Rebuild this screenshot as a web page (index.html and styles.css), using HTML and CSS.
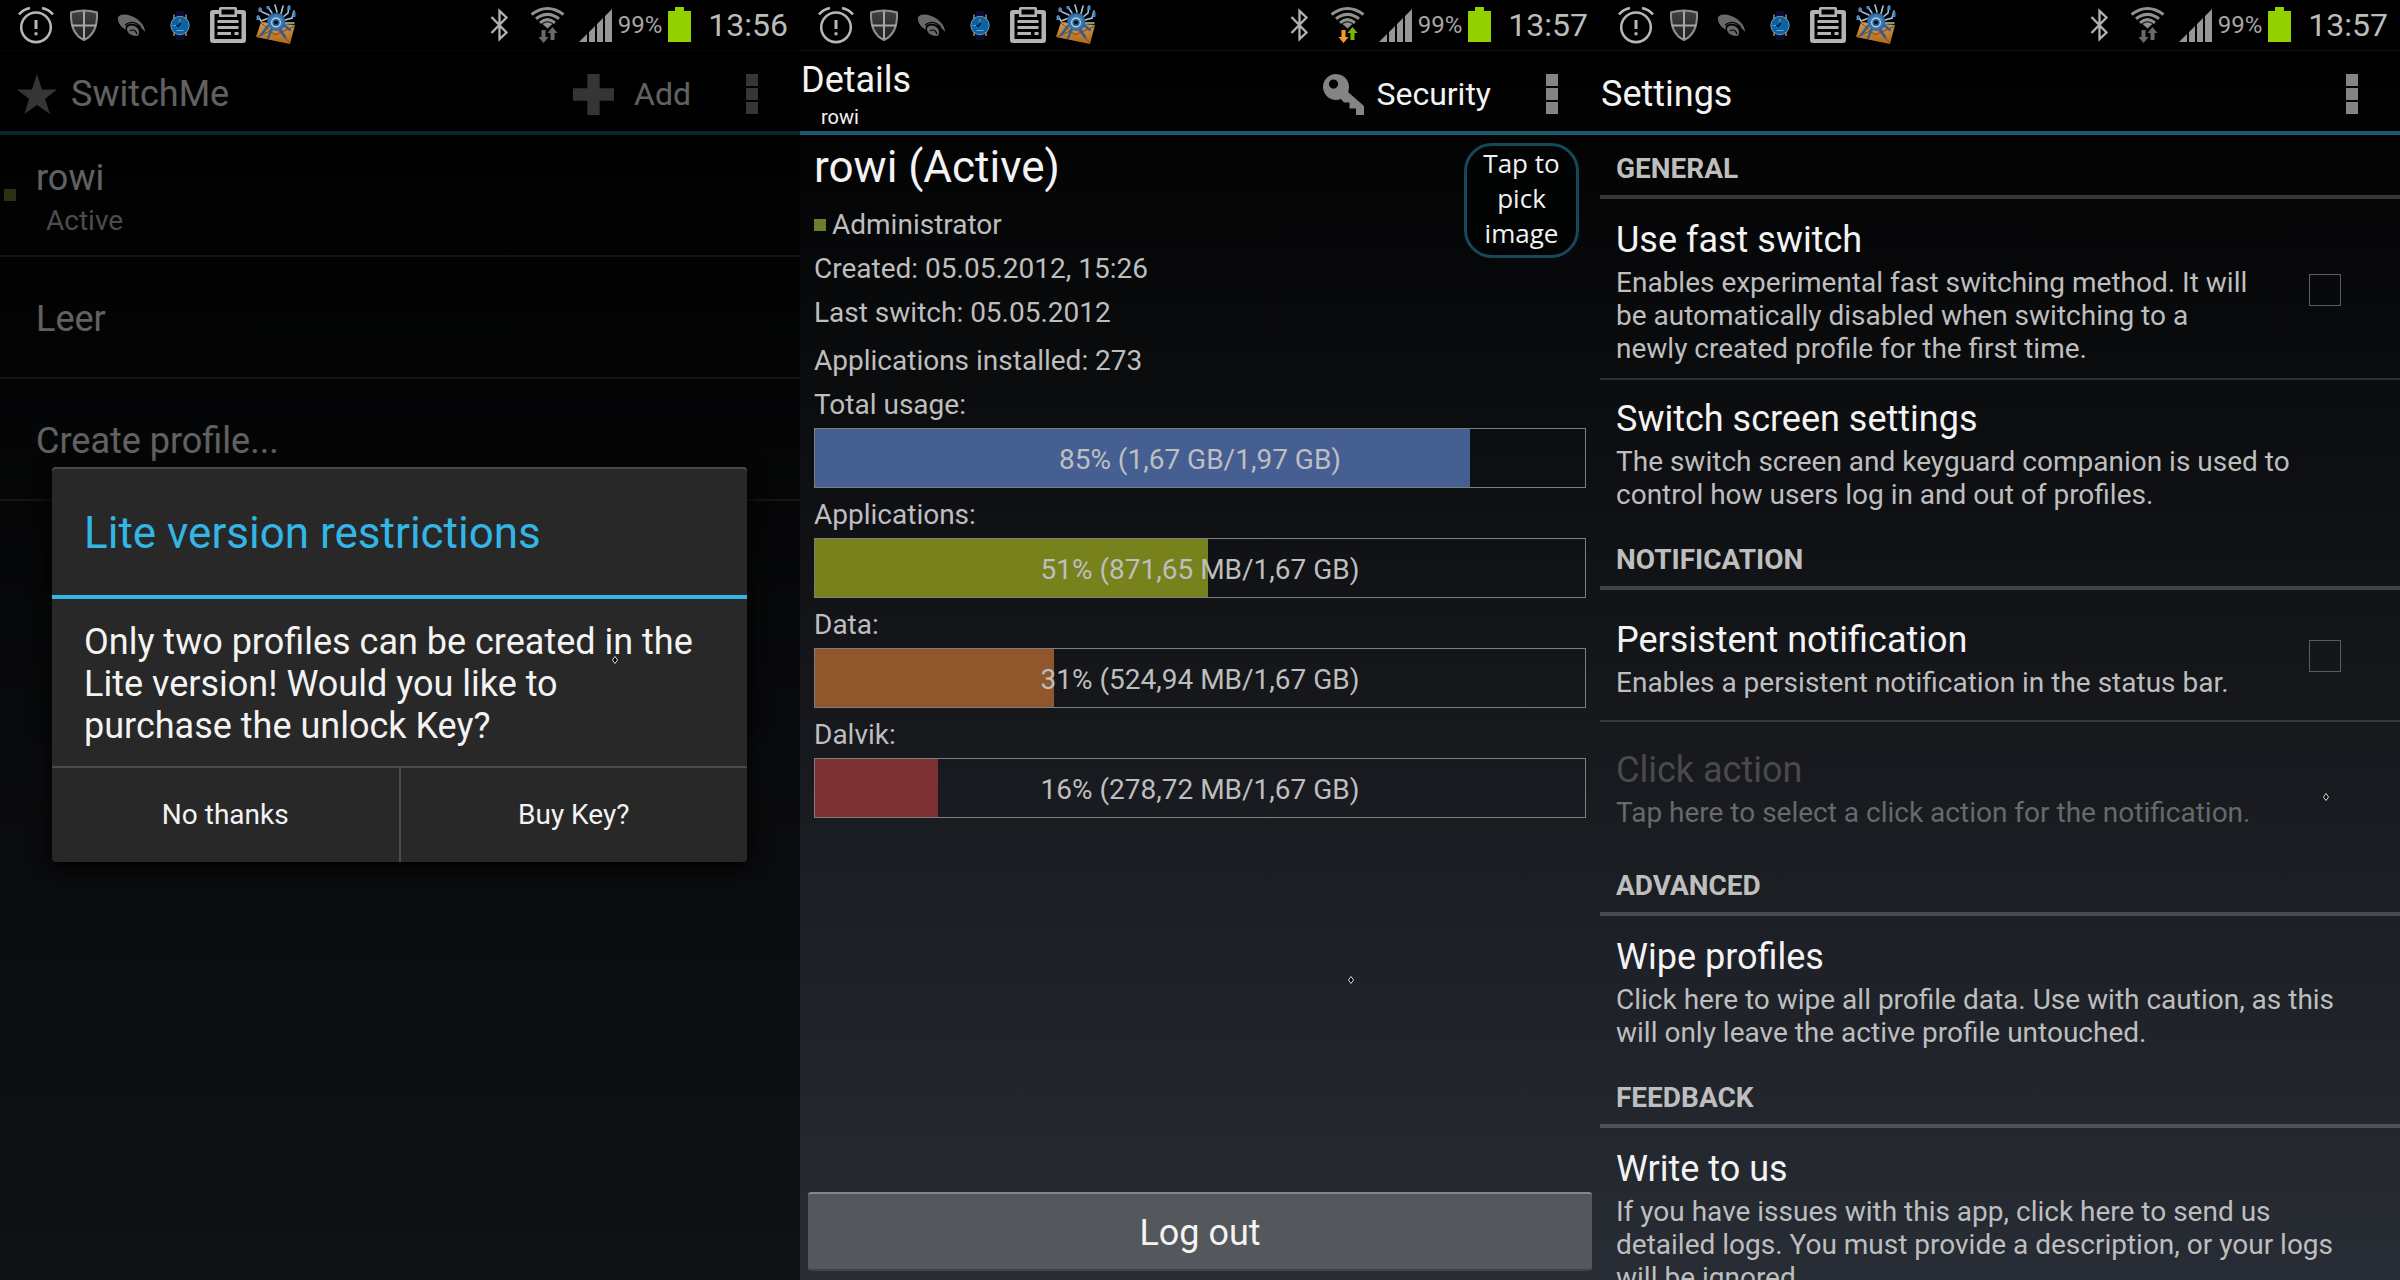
FILE: index.html
```html
<!DOCTYPE html>
<html lang="en">
  <head>
    <meta charset="utf-8">
    <meta name="viewport" content="width=device-width, initial-scale=1.0">
    <title>SwitchMe</title>
    <link rel="stylesheet" href="styles.css">
  </head>
  <body>
    <!-- icons shared by the three screens -->
    <svg class="sprite" aria-hidden="true">
      <defs>
        <linearGradient id="shield-fill" x1="0" y1="0" x2="0" y2="1">
          <stop offset="0" stop-color="#444"/>
          <stop offset="1" stop-color="#1c1c1c"/>
        </linearGradient>
        <linearGradient id="mail-fill" x1="0" y1="0" x2="0" y2="1">
          <stop offset="0" stop-color="#c9a050"/>
          <stop offset="1" stop-color="#b8641a"/>
        </linearGradient>
        <radialGradient id="bug-fill">
          <stop offset="0" stop-color="#6aa8e0"/>
          <stop offset="1" stop-color="#2c5f9e"/>
        </radialGradient>
      </defs>
      <symbol id="i-alarm" viewBox="0 0 48 50">
        <g fill="none" stroke="#b5b7b5" stroke-width="2.6">
          <circle cx="24" cy="27.300" r="14.800"/>
          <path d="M7 14.500Q11 9.500 18 8M41 14.500Q37 9.500 30 8"/>
          <path d="M24 20v9M24 32.200v3" stroke-width="3"/>
        </g>
      </symbol>
      <symbol id="i-shield" viewBox="0 0 48 50">
        <path d="M11 12.500Q24 8.500 37 12.500C37.500 24 35 35 24 40C13 35 10.500 24 11 12.500Z" fill="url(#shield-fill)" stroke="#8f918f" stroke-width="2"/>
        <path d="M24 11v28M11.500 25.500h25" stroke="#a5a7a5" stroke-width="2"/>
      </symbol>
      <symbol id="i-swirl" viewBox="0 0 48 50">
        <path d="M10 17C13 13 22 14 29 19C34 23 37 27 37 32C34 28 31 25 26 24C20 23 16 26 18 30C13 27 9 22 10 17Z" fill="#686a68"/>
        <path d="M19 29C19 25 26 24 30 29C32 32 31 35 29 36C23 36 19 33 19 29Z" fill="#686a68"/>
        <path d="M22 31Q27 28 29 34M17 25Q25 19 33 27" fill="none" stroke="#000" stroke-width="1.2"/>
      </symbol>
      <symbol id="i-watch" viewBox="0 0 48 50">
        <path d="M20 11h8v5h-8zM20 35h8v5h-8z" fill="#0a0c33"/>
        <path d="M18 14.500v6M30 14.500v6M18 30v6M30 30v6" stroke="#8f8f78" stroke-width="1.500"/>
        <circle cx="24" cy="25.500" r="9.200" fill="#0b63a5" stroke="#7f96a0" stroke-width="1"/>
        <path d="M24 19v3M17 25.500h3M20.500 30.500h7" stroke="#6ba3c8" stroke-width="1.200"/>
        <path d="M25 23l-2.500 3l-2-.5" fill="none" stroke="#06162c" stroke-width="1.600"/>
      </symbol>
      <symbol id="i-clip" viewBox="0 0 48 50">
        <path fill-rule="evenodd" d="M9 10h6V8.500q0-1.500 1.500-1.500h15q1.500 0 1.500 1.500V10h6q3 0 3 3v27q0 3-3 3H9q-3 0-3-3V13q0-3 3-3zM17.500 9.500v5h13v-5zM10.500 14v25h27V14H33v3H15v-3z" fill="#b2b4b2"/>
        <path d="M13.500 21.500h21M13.500 27.500h21M13.500 33.500h13.500M30.500 33.500h4" stroke="#b2b4b2" stroke-width="3"/>
      </symbol>
      <symbol id="i-bug" viewBox="0 0 48 50">
        <path d="M9 22L43 25L38 44L4 37Z" fill="url(#mail-fill)"/>
        <path d="M9 23L23 35L43 26M5 37L20 30M38 43L27 31" fill="none" stroke="#7a4616" stroke-width="1"/>
        <g fill="none" stroke="#a9c4da" stroke-width="1.600" stroke-linecap="round">
          <path d="M17 18L9 21L6 16M17 15L10 12L8 8M20 13L16 7M25 12L23 5M29 14L31 6M31 17L36 13L37 6M33 20L40 18L42 11M33 23L42 23"/>
        </g>
        <path d="M6 16v4M8 8v4M16 6v3M37 6v4M42 12v5" stroke="#4b87c4" stroke-width="3"/>
        <path d="M16 26L9 35M20 29L16 38M28 29L33 37M32 25L38 30" fill="none" stroke="#2b5f9c" stroke-width="2.400" stroke-linecap="round"/>
        <path d="M15 19Q17 13 24 13Q32 13 33 20Q34 30 25 31Q15 30 15 19Z" fill="url(#bug-fill)"/>
        <circle cx="24" cy="22.500" r="5" fill="#b4ccdc"/>
        <circle cx="24" cy="22.500" r="3.600" fill="#17598d"/>
        <circle cx="24" cy="22.500" r="1.800" fill="#030b14"/>
      </symbol>
      <symbol id="i-bluetooth" viewBox="0 0 48 50">
        <path d="M15.500 17L30.500 32.500L23.500 39V11L30.500 17.500L15.500 33" fill="none" stroke="#b2b4b2" stroke-width="2.300"/>
      </symbol>
      <symbol id="i-wifi" viewBox="0 0 48 50">
        <g fill="none" stroke="#8f918f" stroke-width="3">
          <path d="M7.500 14.500Q23.500 2.500 39.500 14.500"/>
          <path d="M12 18.800Q23.500 10 35 18.800"/>
          <path d="M16 22.800Q23.500 16.500 31 22.800"/>
        </g>
        <path d="M18.500 24Q23.500 20.500 28.500 24L23.500 28.500Z" fill="#8f918f"/>
        <path d="M17.500 30h4v7h3l-5 6l-5-6h3z" fill="var(--down)"/>
        <path d="M26.500 40h4v-7h3l-5-6l-5 6h3z" fill="var(--up)"/>
      </symbol>
      <symbol id="i-signal" viewBox="0 0 34 50">
        <path d="M0 42L8 34V42ZM10 42V32L16 26V42ZM18 42V24L24 18V42ZM26 42V16L33 9V42Z" fill="#969896"/>
      </symbol>
      <symbol id="i-battery" viewBox="0 0 24 50">
        <path d="M0 11H7V7H16V11H23V42H0Z" fill="#92d000"/>
      </symbol>
      <symbol id="i-more" viewBox="0 0 12 40">
        <path d="M0 0h12v12H0zM0 14h12v12H0zM0 28h12v12H0z" fill="#848484"/>
      </symbol>
      <symbol id="i-mark" viewBox="0 0 8 10">
        <path d="M4 1.500L6.500 5L4 8.500L1.500 5Z" fill="#000" stroke="#ddd" stroke-width="1"/>
      </symbol>
    </svg>

    <main class="screens">
      <!-- profile list -->
      <section class="screen">
        <div class="status">
          <svg class="ico"><use href="#i-alarm"/></svg>
          <svg class="ico"><use href="#i-shield"/></svg>
          <svg class="ico"><use href="#i-swirl"/></svg>
          <svg class="ico"><use href="#i-watch"/></svg>
          <svg class="ico"><use href="#i-clip"/></svg>
          <svg class="ico"><use href="#i-bug"/></svg>
          <div class="status-right">
            <svg class="ico"><use href="#i-bluetooth"/></svg>
            <svg class="ico"><use href="#i-wifi"/></svg>
            <svg class="signal"><use href="#i-signal"/></svg>
            <span class="percent">99%</span>
            <svg class="battery"><use href="#i-battery"/></svg>
            <span class="clock">13:56</span>
          </div>
        </div>
        <header class="bar">
          <svg class="star" viewBox="0 0 40 40"><path d="M20 0L25 15.500H40L28 25L33 40L20 31L7.500 40L12 25L0 15.500H15Z" fill="#848484"/></svg>
          <h1>SwitchMe</h1>
          <button class="action" type="button">
            <svg viewBox="0 0 40 40"><path d="M14 0H26V14H40V26H26V40H14V26H0V14H14Z" fill="#848484"/></svg>
            Add
          </button>
          <button class="more" type="button" aria-label="More"><svg><use href="#i-more"/></svg></button>
        </header>
        <ul class="profiles">
          <li>
            <i class="dot"></i>
            <button type="button">rowi<small>Active</small></button>
          </li>
          <li><button type="button">Leer</button></li>
          <li><button type="button">Create profile...</button></li>
        </ul>
        <div class="dim">
          <div class="dialog" role="dialog" aria-labelledby="dialog-title">
            <h2 id="dialog-title">Lite version restrictions</h2>
            <p>Only two profiles can be created in the Lite version! Would you like to purchase the unlock Key?</p>
            <div class="dialog-buttons">
              <button type="button">No thanks</button>
              <button type="button">Buy Key?</button>
            </div>
          </div>
        </div>
        <svg class="mark mark-list"><use href="#i-mark"/></svg>
      </section>

      <!-- profile details -->
      <section class="screen">
        <div class="status wifi-active">
          <svg class="ico"><use href="#i-alarm"/></svg>
          <svg class="ico"><use href="#i-shield"/></svg>
          <svg class="ico"><use href="#i-swirl"/></svg>
          <svg class="ico"><use href="#i-watch"/></svg>
          <svg class="ico"><use href="#i-clip"/></svg>
          <svg class="ico"><use href="#i-bug"/></svg>
          <div class="status-right">
            <svg class="ico"><use href="#i-bluetooth"/></svg>
            <svg class="ico"><use href="#i-wifi"/></svg>
            <svg class="signal"><use href="#i-signal"/></svg>
            <span class="percent">99%</span>
            <svg class="battery"><use href="#i-battery"/></svg>
            <span class="clock">13:57</span>
          </div>
        </div>
        <header class="bar">
          <div>
            <h1>Details</h1>
            <p class="subtitle">rowi</p>
          </div>
          <button class="action" type="button">
            <svg viewBox="0 0 41 41"><path fill-rule="evenodd" d="M13 0A13 13 0 0 1 25 18L41 32V41H33V34.500H26.500V28.500H21L18 25A13 13 0 1 1 13 0ZM10.500 5.500A4.600 4.600 0 1 0 10.500 14.700A4.600 4.600 0 1 0 10.500 5.500Z" fill="#848484"/></svg>
            Security
          </button>
          <button class="more" type="button" aria-label="More"><svg><use href="#i-more"/></svg></button>
        </header>
        <div class="details">
          <button class="pick" type="button">Tap to pick image</button>
          <h2>rowi (Active)</h2>
          <p class="role"><i class="dot"></i>Administrator</p>
          <p>Created: 05.05.2012, 15:26</p>
          <p>Last switch: 05.05.2012</p>
          <div class="usage">
            <p>Applications installed: 273</p>
            <p>Total usage:</p>
            <div class="meter"><div class="fill total" style="width: 85%"></div><span>85% (1,67 GB/1,97 GB)</span></div>
            <p>Applications:</p>
            <div class="meter"><div class="fill apps" style="width: 51%"></div><span>51% (871,65 MB/1,67 GB)</span></div>
            <p>Data:</p>
            <div class="meter"><div class="fill data" style="width: 31%"></div><span>31% (524,94 MB/1,67 GB)</span></div>
            <p>Dalvik:</p>
            <div class="meter"><div class="fill dalvik" style="width: 16%"></div><span>16% (278,72 MB/1,67 GB)</span></div>
          </div>
        </div>
        <button class="logout" type="button">Log out</button>
        <svg class="mark mark-details"><use href="#i-mark"/></svg>
      </section>

      <!-- settings -->
      <section class="screen">
        <div class="status">
          <svg class="ico"><use href="#i-alarm"/></svg>
          <svg class="ico"><use href="#i-shield"/></svg>
          <svg class="ico"><use href="#i-swirl"/></svg>
          <svg class="ico"><use href="#i-watch"/></svg>
          <svg class="ico"><use href="#i-clip"/></svg>
          <svg class="ico"><use href="#i-bug"/></svg>
          <div class="status-right">
            <svg class="ico"><use href="#i-bluetooth"/></svg>
            <svg class="ico"><use href="#i-wifi"/></svg>
            <svg class="signal"><use href="#i-signal"/></svg>
            <span class="percent">99%</span>
            <svg class="battery"><use href="#i-battery"/></svg>
            <span class="clock">13:57</span>
          </div>
        </div>
        <header class="bar">
          <h1>Settings</h1>
          <button class="more" type="button" aria-label="More"><svg><use href="#i-more"/></svg></button>
        </header>
        <div class="settings">
          <h2>GENERAL</h2>
          <div class="pref">
            <label for="fast-switch">
              <b>Use fast switch</b>
              Enables experimental fast switching method. It will be automatically disabled when switching to a newly created profile for the first time.
            </label>
            <input type="checkbox" id="fast-switch">
          </div>
          <div class="pref">
            <div>
              <b>Switch screen settings</b>
              The switch screen and keyguard companion is used to control how users log in and out of profiles.
            </div>
          </div>
          <h2>NOTIFICATION</h2>
          <div class="pref">
            <label for="persistent">
              <b>Persistent notification</b>
              Enables a persistent notification in the status bar.
            </label>
            <input type="checkbox" id="persistent">
          </div>
          <div class="pref disabled">
            <div>
              <b>Click action</b>
              Tap here to select a click action for the notification.
            </div>
          </div>
          <h2>ADVANCED</h2>
          <div class="pref">
            <div>
              <b>Wipe profiles</b>
              Click here to wipe all profile data. Use with caution, as this will only leave the active profile untouched.
            </div>
          </div>
          <h2>FEEDBACK</h2>
          <div class="pref">
            <div>
              <b>Write to us</b>
              If you have issues with this app, click here to send us detailed logs. You must provide a description, or your logs will be ignored.
            </div>
          </div>
        </div>
        <svg class="mark mark-settings"><use href="#i-mark"/></svg>
      </section>
    </main>
  </body>
</html>
```

FILE: styles.css
```css
* {
  box-sizing: border-box;
}

body {
  margin: 0;
  background-color: #000;
  color: #f3f3f3;
  font-family: Roboto, sans-serif;
  font-size: 28px;
  line-height: 33px;
}

h1,
h2,
p,
ul {
  margin: 0;
  padding: 0;
  font-weight: 400;
}

button {
  padding: 0;
  border: none;
  background: none;
  color: inherit;
  font: inherit;
  cursor: pointer;
}

svg {
  display: block;
}

.sprite {
  position: absolute;
  width: 0;
  height: 0;
}

.screens {
  display: grid;
  grid-template-columns: repeat(3, 1fr);
  height: 100vh;
}

.screen {
  position: relative;
  display: flex;
  flex-direction: column;
  min-width: 0;
  overflow: hidden;
  background: linear-gradient(#000 50px, #282c34);
}

/* status bar */
.status {
  --down: #686a68;
  --up: #686a68;
  display: flex;
  flex-shrink: 0;
  height: 50px;
  padding: 0 12px;
  background-color: #000;
}

.wifi-active {
  --down: #f79a2b;
  --up: #7db500;
}

.status-right {
  display: flex;
  align-items: center;
  margin-left: auto;
}

.ico {
  width: 48px;
  height: 50px;
}

.signal {
  width: 34px;
  height: 50px;
  margin: 0 5px 0 7px;
}

.percent {
  color: #a5a7a5;
  font-size: 24px;
}

.battery {
  width: 24px;
  height: 50px;
  margin: 0 16px 0 6px;
}

.clock {
  color: #bbbdbb;
  font-size: 32px;
}

/* action bar */
.bar {
  display: flex;
  flex-shrink: 0;
  align-items: center;
  height: 85px;
  padding: 2px 42px 0 1px;
  border-top: 1px solid #111;
  box-shadow: inset 0 -4px #1a5a70;
}

.bar h1 {
  font-size: 36px;
  line-height: 42px;
}

.star {
  width: 40px;
  height: 40px;
  margin: 0 14px 0 16px;
}

.subtitle {
  margin: 4px 0 0 20px;
  font-size: 20px;
  line-height: 24px;
}

.action {
  display: flex;
  align-items: center;
  justify-content: space-between;
  gap: 12px;
  min-width: 118px;
  margin-left: auto;
  font-size: 32px;
}

.action svg {
  width: 41px;
  height: 41px;
}

.more {
  margin-left: 55px;
}

.bar h1 + .more {
  margin-left: auto;
}

.more svg {
  width: 12px;
  height: 40px;
}

/* profile list */
.profiles {
  list-style: none;
}

.profiles li {
  display: flex;
  align-items: center;
  height: 122px;
  border-bottom: 2px solid #2f3132;
}

.profiles button {
  flex: 1;
  padding: 4px 0 0 36px;
  font-size: 36px;
  line-height: 42px;
  text-align: left;
}

.profiles small {
  display: block;
  margin: 5px 0 0 10px;
  color: #bebebe;
  font-size: 28px;
  line-height: 33px;
}

.dot {
  width: 12px;
  height: 12px;
  background-color: #6c7e2b;
}

.profiles .dot {
  margin: 0 -16px 0 4px;
}

.dim {
  position: absolute;
  inset: 50px 0 0;
  display: flex;
  align-items: center;
  justify-content: center;
  padding: 0 53px 2px 52px;
  background-color: rgba(0, 0, 0, 0.6);
}

.dialog {
  flex: 1;
  border-radius: 4px;
  background-color: #282828;
  box-shadow: inset 0 2px #4a4a4a, 0 6px 20px #000;
}

.dialog h2 {
  padding: 40px 32px 36px;
  border-bottom: 4px solid #33b5e5;
  color: #33b5e5;
  font-size: 44px;
  line-height: 52px;
}

.dialog p {
  padding: 22px 40px 19px 32px;
  font-size: 36px;
  line-height: 42px;
}

.dialog-buttons {
  display: flex;
  border-top: 2px solid #4a4a4a;
}

.dialog-buttons button {
  flex: 1;
  height: 94px;
}

.dialog-buttons button + button {
  border-left: 2px solid #4a4a4a;
}

/* profile details */
.details {
  position: relative;
  padding: 6px 14px 0;
  color: #bebebe;
}

.details h2 {
  margin-bottom: 15px;
  color: #f3f3f3;
  font-size: 44px;
  line-height: 52px;
}

.details p {
  margin-bottom: 11px;
}

.role {
  display: flex;
  align-items: center;
  gap: 6px;
}

.pick {
  position: absolute;
  top: 8px;
  right: 21px;
  width: 115px;
  height: 115px;
  padding: 0 10px 6px;
  border: 3px solid #17485a;
  border-radius: 28px;
  background-color: #020303;
  color: #f3f3f3;
  font-family: "Open Sans", sans-serif;
  font-size: 26px;
  font-weight: 500;
  line-height: 35px;
}

.usage {
  padding-top: 4px;
}

.details .usage p + .meter {
  margin: -4px 0 10px;
}

.meter {
  position: relative;
  height: 60px;
  border: 1px solid #7c7e80;
}

.fill {
  height: 100%;
}

.meter span {
  position: absolute;
  inset: 14px 0 0;
  text-align: center;
}

.total {
  background-color: #465f93;
}

.apps {
  background-color: #78821c;
}

.data {
  background-color: #8f572b;
}

.dalvik {
  background-color: #7d3031;
}

.logout {
  height: 79px;
  margin: auto 8px 9px;
  padding-top: 4px;
  border-top: 2px solid #83868a;
  border-bottom: 2px solid #404347;
  border-radius: 3px;
  background-color: #54575b;
  font-size: 36px;
}

/* settings */
.settings {
  flex: 1;
  min-height: 0;
  color: #bebebe;
}

.settings h2 {
  height: 64px;
  padding: 17px 16px 0;
  border-bottom: 4px solid rgba(255, 255, 255, 0.2);
  font-size: 28px;
  font-weight: 700;
}

.pref {
  display: flex;
  align-items: center;
  min-height: 132px;
  padding: 20px 32px 15px 16px;
}

/* the divider lies inside the bottom padding of the row before it */
.pref + .pref {
  margin-top: -2px;
  padding-top: 18px;
  border-top: 2px solid rgba(255, 255, 255, 0.14);
}

.pref label,
.pref div {
  flex: 1;
}

.pref b {
  display: block;
  margin-bottom: 5px;
  color: #f3f3f3;
  font-size: 36px;
  font-weight: 400;
  line-height: 42px;
}

.pref input {
  appearance: none;
  width: 32px;
  height: 32px;
  margin: 0 27px 5px 49px;
  border: 1px solid #5a5c5e;
}

.disabled {
  color: #67696b;
}

.disabled b {
  color: #4a4a4a;
}

/* small diamond markers */
.mark {
  position: absolute;
  width: 8px;
  height: 10px;
}

.mark-list {
  left: 611px;
  top: 655px;
}

.mark-details {
  left: 547px;
  top: 975px;
}

.mark-settings {
  left: 722px;
  top: 792px;
}
```
